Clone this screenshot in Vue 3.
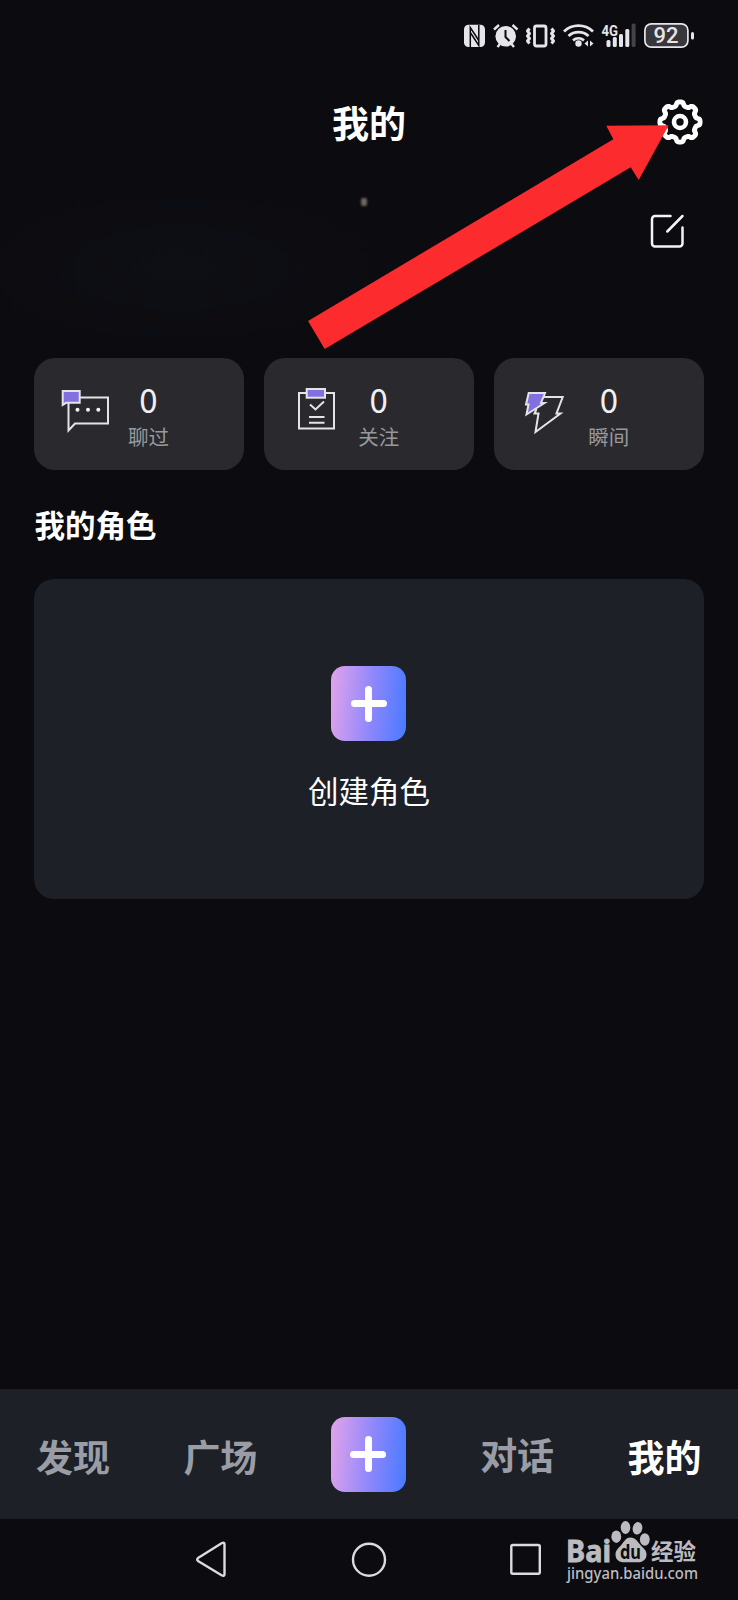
<script setup>
const stats = [
  { id: 'chat', count: 0, label: '聊过' },
  { id: 'follow', count: 0, label: '关注' },
  { id: 'moment', count: 0, label: '瞬间' },
]

// Eight-lobed gear outline
const gearPoints = Array.from({ length: 160 }, (_, i) => {
  const t = (i / 160) * Math.PI * 2
  const c = Math.cos(8 * t)
  const r = 18.2 + 1.9 * Math.tanh(2.2 * c) / Math.tanh(2.2)
  return `${(24 + r * Math.sin(t)).toFixed(2)},${(24 - r * Math.cos(t)).toFixed(2)}`
}).join(' ')
</script>

<template>
  <div class="screen">
    <div class="status">
      <svg width="236" height="30" viewBox="460 20 236 30">
        <g fill="#e6e5ea">
          <rect x="464" y="24.700" width="21" height="22.300" rx="4.500" />
          <path d="M470.300 47V27.500L478.800 40.500M470.300 32.500L478.800 45.500V25" fill="none" stroke="#0b0b10" stroke-width="1.500" />
          <circle cx="505.700" cy="36.300" r="10.300" />
          <path d="M494 29.500l5-4.500M512.500 25l5 4.500M500 44l-2.500 3M511.500 44l2.500 3" stroke="#e6e5ea" stroke-width="2.400" />
          <path d="M505.500 30v7l4 4" fill="none" stroke="#0b0b10" stroke-width="2" />
          <circle cx="578.500" cy="43.500" r="3.200" />
          <path d="M588 40.500v6l-3.500-3zM590 40.500v6l3.500-3z" />
          <rect x="606.500" y="40" width="4" height="7" rx="1.500" />
          <rect x="612.800" y="37" width="4" height="10" rx="1.500" />
          <rect x="619" y="34" width="4" height="13" rx="1.500" />
          <rect x="625.300" y="29" width="4" height="18" rx="1.500" />
          <rect x="631.600" y="23.500" width="4" height="23.500" rx="1.500" fill="#434247" />
          <text x="601.500" y="35.500" class="net" textLength="16.500" lengthAdjust="spacingAndGlyphs">4G</text>
          <rect x="691" y="32" width="3" height="7.500" rx="1.500" />
        </g>
        <g fill="none" stroke="#e6e5ea" stroke-width="2.800">
          <rect x="534.500" y="26" width="11.500" height="20" rx="2" />
          <path d="M529.500 28.500l-2 2.500 2 2.500-2 2.500 2 2.500-2 2.500 2 2.500" stroke-width="3" stroke-linejoin="round" />
          <path d="M551.500 28.500l2 2.500-2 2.500 2 2.500-2 2.500 2 2.500-2 2.500" stroke-width="3" stroke-linejoin="round" />
          <path d="M564 31.500a21 21 0 0 1 29 0M568.500 36a15 15 0 0 1 20 0M573 40.300a9 9 0 0 1 11 0" />
          <rect x="644.900" y="23.800" width="43" height="23.400" rx="6.500" fill="#38373c" stroke-width="1.700" />
        </g>
        <text x="666" y="43.300" class="batt" text-anchor="middle">92</text>
      </svg>
    </div>

    <header class="header">
      <h1 class="title">我的</h1>
      <svg class="gear" width="48" height="48" viewBox="0 0 48 48" fill="none" stroke="#fff">
        <polygon :points="gearPoints" stroke-width="4.900" stroke-linejoin="round" />
        <circle cx="24" cy="24" r="6" stroke-width="4.600" />
      </svg>
    </header>

    <section class="profile">
      <i class="speck"></i>
      <svg class="edit" width="36" height="36" viewBox="0 0 36 36" fill="none" stroke="#f4f4f6" stroke-width="2.500" stroke-linecap="round">
        <path d="M21.500 3H6a3 3 0 0 0-3 3v24.500a3 3 0 0 0 3 3h24.500a3 3 0 0 0 3-3V14.500M18.300 18.500L33.500 3" />
      </svg>
    </section>

    <section class="stats">
      <div v-for="s in stats" :key="s.id" class="stat">
        <svg class="stat-icon" width="56" height="56" viewBox="0 0 56 56" fill="none" stroke="#e4e3e8" stroke-width="2">
          <template v-if="s.id === 'chat'">
            <path d="M26 15.500H54V41.500H21L14.500 48.500V20" />
            <path d="M8.700 23V9H25.700v11.800H12z" fill="#836fe0" />
            <g fill="#f2f1f5" stroke="none">
              <circle cx="23.500" cy="27.800" r="2" /><circle cx="34" cy="27.800" r="2" /><circle cx="44.300" cy="27.800" r="2" />
            </g>
          </template>
          <template v-else-if="s.id === 'follow'">
            <rect x="15" y="11" width="35" height="35.500" />
            <rect x="22.700" y="7" width="18.300" height="8.700" fill="#836fe0" />
            <path d="M26 22.500l5.500 5L40 19.500M25 35h15.500M25 40.700h15.500" />
          </template>
          <template v-else>
            <path d="M29 15H48.700L42.500 31.500H46.500L21.500 50 24.500 31.500H20.500L22.500 27" />
            <path d="M14.700 11H31L27 21H30.500L12.500 32.500 14.500 22.500H12z" fill="#836fe0" />
          </template>
        </svg>
        <div class="stat-text">
          <span class="count">{{ s.count }}</span>
          <span class="label">{{ s.label }}</span>
        </div>
      </div>
    </section>

    <h2 class="section-title">我的角色</h2>

    <section class="create">
      <span class="plus"></span>
      <span class="create-text">创建角色</span>
    </section>

    <nav class="tabs">
      <span class="tab">发现</span>
      <span class="tab">广场</span>
      <span class="plus"></span>
      <span class="tab raised">对话</span>
      <span class="tab active">我的</span>
    </nav>

    <footer class="system">
      <svg width="738" height="81" viewBox="0 1519 738 81">
        <g fill="none" stroke="#dcdbe0" stroke-width="2.400" stroke-linejoin="round">
          <path d="M198 1558q-1.500 1.500 0 3l24 14.500q2.500 1 2.500-1.500v-29.500q0-2.500-2.500-1.500z" />
          <circle cx="369" cy="1559.700" r="16" />
          <rect x="511.300" y="1545" width="28.500" height="28.800" rx="1.500" />
        </g>
        <g fill="#bcbbc0">
          <text x="566" y="1561.500" class="bai" textLength="45" lengthAdjust="spacingAndGlyphs">Bai</text>
          <ellipse cx="616.300" cy="1536.700" rx="4.900" ry="6.200" />
          <ellipse cx="625.500" cy="1527.500" rx="4.800" ry="6.500" />
          <ellipse cx="637.500" cy="1528.300" rx="4.800" ry="6.300" transform="rotate(12 637.500 1528.300)" />
          <ellipse cx="644.800" cy="1539.500" rx="4.900" ry="6.200" />
          <path d="M630.500 1537.500c5 0 7 4 9.500 7 3 3.500 6.500 5.500 6.500 10 0 6-5 8-9 7.800-3-.2-10-.2-13 0-5 .2-9-2.500-9-7.800 0-5 4-7 6.500-10.500 2.500-3 4-6.500 8.500-6.500z" />
          <text x="620" y="1558.500" class="du" textLength="21" lengthAdjust="spacingAndGlyphs">du</text>
          <text x="651" y="1559.800" class="jy" textLength="45" lengthAdjust="spacingAndGlyphs">经验</text>
          <text x="567" y="1579" class="url" textLength="131" lengthAdjust="spacingAndGlyphs">jingyan.baidu.com</text>
        </g>
      </svg>
    </footer>

    <svg class="pointer" width="738" height="400" viewBox="0 0 738 400">
      <polygon points="308,321 613.300,139.300 606.300,125.700 668.700,125.300 638.700,180 630.700,167.300 324.700,349" fill="#fc2c2e" />
    </svg>
  </div>
</template>

<style>
html,
body {
  margin: 0;
  background: #0b0b10;
}
</style>

<style scoped>
.screen {
  position: relative;
  width: 738px;
  height: 1600px;
  display: flex;
  flex-direction: column;
  overflow: hidden;
  box-sizing: border-box;
  background: #0b0b10;
  color: #fff;
  font-family: "Noto Sans CJK SC", sans-serif;
}
.status {
  height: 50px;
  padding: 20px 42px 0 0;
  box-sizing: border-box;
  display: flex;
  justify-content: flex-end;
}
.status svg,
.system svg {
  display: block;
}
.net {
  font: 700 15px Roboto, sans-serif;
}
.batt {
  font: 500 22px Roboto, sans-serif;
  fill: #e6e5ea;
}
.header {
  height: 143px;
  display: grid;
  grid-template-columns: 1fr auto 1fr;
  align-items: center;
  padding: 0 34.500px;
}
.title {
  grid-column: 2;
  margin: 0;
  font-size: 37px;
  line-height: 54px;
  font-weight: 700;
}
.gear {
  justify-self: end;
}
.profile {
  height: 165px;
  display: flex;
  justify-content: flex-end;
  align-items: flex-start;
  box-sizing: border-box;
  padding: 20px 53px 0 0;
  background: radial-gradient(ellipse 230px 85px at 180px 75px, #0e0f14, #0b0b10);
}
.speck {
  width: 6px;
  height: 8px;
  margin: -15px 282px 0 0;
  border-radius: 2px;
  background: #70665d;
  filter: blur(1.200px);
}
.stats {
  display: grid;
  grid-template-columns: repeat(3, 1fr);
  gap: 20.500px;
  height: 112px;
  padding: 0 34px;
}
.stat {
  display: flex;
  align-items: flex-start;
  box-sizing: border-box;
  padding: 24px 0 0 20px;
  border-radius: 21px;
  background: #2a2a2e;
}
.stat-text {
  display: flex;
  flex-direction: column;
  align-items: center;
  width: 41px;
  margin-left: 18px;
}
.count {
  margin-top: -8px;
  font-size: 33px;
  line-height: 50px;
  color: #f0eff4;
}
.label {
  margin-top: -3px;
  font-size: 20.500px;
  line-height: 30px;
  color: #98989d;
  white-space: nowrap;
}
.section-title {
  margin: 31px 0 0 34.500px;
  font-size: 30.500px;
  line-height: 46px;
  font-weight: 700;
}
.create {
  margin: 32px 34px 0;
  height: 320px;
  border-radius: 20px;
  background: #1d2027;
  display: flex;
  flex-direction: column;
  align-items: center;
  box-sizing: border-box;
  padding-top: 87px;
}
.plus {
  flex: none;
  width: 75px;
  height: 75px;
  margin-right: 1px;
  border-radius: 14px;
  background: linear-gradient(95deg, #dba1ec 5%, #8d87fb 54%, #4d7bff 96%);
  display: grid;
  place-items: center;
}
.plus::before,
.plus::after {
  content: "";
  grid-area: 1 / 1;
  width: 36px;
  height: 7px;
  border-radius: 3.500px;
  background: #fff;
}
.plus::after {
  width: 7px;
  height: 36px;
}
.create-text {
  margin-top: 26px;
  font-size: 30.500px;
  line-height: 46px;
}
.tabs {
  margin-top: auto;
  height: 130px;
  flex: none;
  display: flex;
  justify-content: space-between;
  align-items: center;
  box-sizing: border-box;
  padding: 0 36.500px 0 36px;
  background: #1d2027;
}
.tab {
  padding-top: 4px;
  font-size: 37px;
  line-height: 54px;
  font-weight: 700;
  color: #9a9ca6;
}
.raised {
  margin-bottom: 4px;
}
.active {
  color: #fff;
}
.system {
  height: 81px;
  flex: none;
}
.bai {
  font: 700 30px "Noto Sans", sans-serif;
  stroke: #bcbbc0;
  stroke-width: 0.800px;
}
.du {
  font: 700 20px "Noto Sans", sans-serif;
  fill: #0b0b10;
}
.jy {
  font: 700 23px "Noto Sans CJK SC", sans-serif;
}
.url {
  font: 500 17px "Noto Sans", sans-serif;
}
.pointer {
  position: absolute;
  left: 0;
  top: 0;
}
</style>
